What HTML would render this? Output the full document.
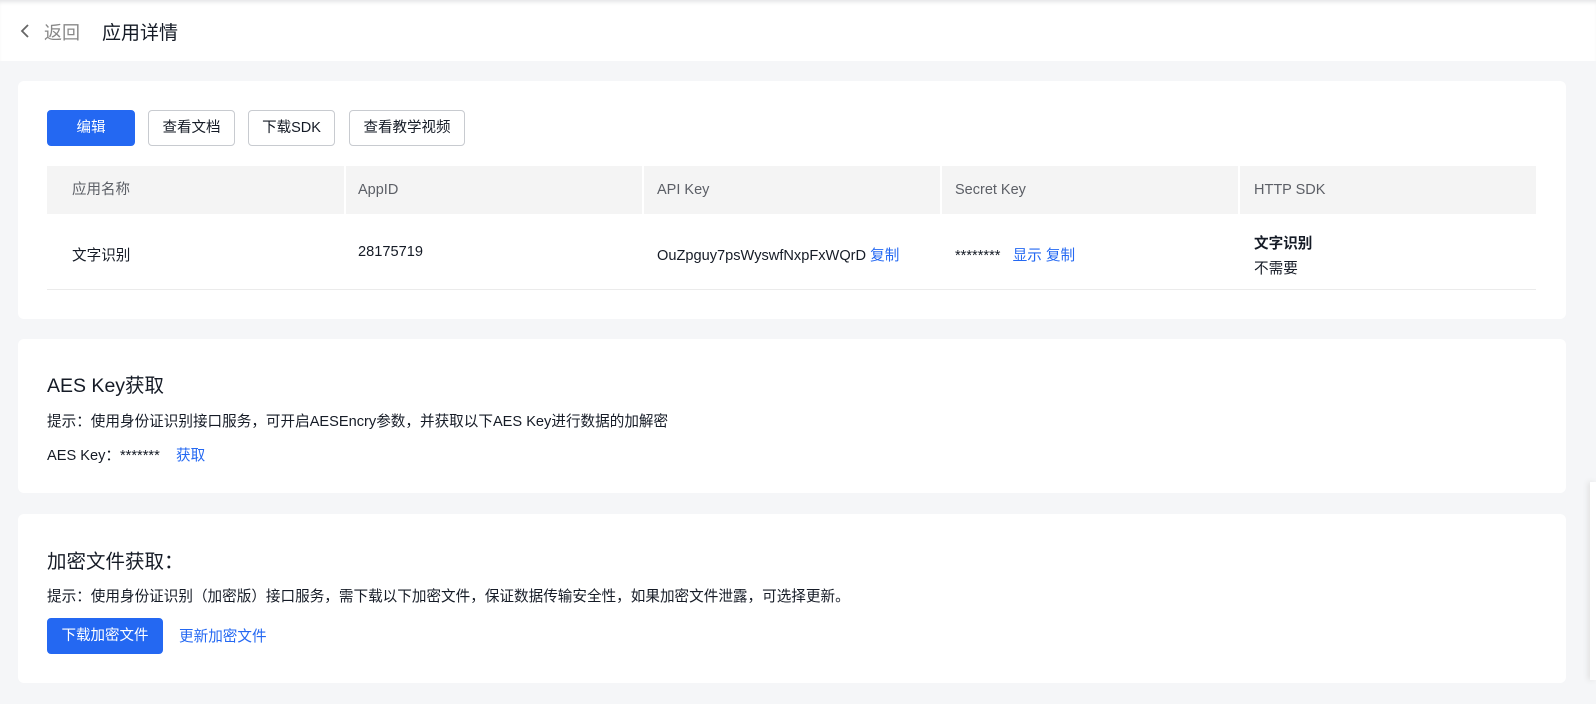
<!DOCTYPE html>
<html><head><meta charset="utf-8"><style>
*{margin:0;padding:0;box-sizing:border-box}
body{width:1596px;height:704px;background:#f5f6f8;font-family:"Liberation Sans","Noto Sans CJK SC",sans-serif;color:#151b26;position:relative;overflow:hidden}
.a{position:absolute;white-space:nowrap}
.hdr{position:absolute;left:0;top:0;width:1596px;height:61px;background:#fff;box-shadow:inset 0 4px 4px -2px #e3e4e6}
.card{position:absolute;left:18px;width:1548px;background:#fff;border-radius:6px}
.btn{position:absolute;height:36px;top:110px;border:1px solid #c8cbd0;border-radius:4px;font-size:14.5px;line-height:34px;text-align:center;background:#fff;color:#151b26}
.pri{background:#2468f2;border-color:#2468f2;color:#fff}
.th{position:absolute;top:166px;height:48px;background:#f4f4f4;font-size:14.5px;color:#5c5f66;line-height:48px;padding-left:25px}
.td{font-size:14.6px;color:#151b26}
.lk{color:#2468f2}
</style></head><body>
<div class="hdr"></div>
<svg class="a" style="left:19px;top:23px" width="12" height="16" viewBox="0 0 12 16"><path d="M9 2 L3 8 L9 14" fill="none" stroke="#666" stroke-width="1.8"/></svg>
<div class="a" style="left:44px;top:19px;font-size:18px;color:#888">返回</div>
<div class="a" style="left:102px;top:18px;font-size:19px;color:#151b26">应用详情</div>

<div class="card" style="top:81px;height:238px"></div>
<div class="btn pri" style="left:47px;width:88px">编辑</div>
<div class="btn" style="left:148px;width:87px">查看文档</div>
<div class="btn" style="left:248px;width:87px">下载SDK</div>
<div class="btn" style="left:349px;width:116px">查看教学视频</div>

<div class="th" style="left:47px;width:297px">应用名称</div>
<div class="th" style="left:346px;width:296px;padding-left:12px">AppID</div>
<div class="th" style="left:644px;width:296px;padding-left:13px">API Key</div>
<div class="th" style="left:942px;width:296px;padding-left:13px">Secret Key</div>
<div class="th" style="left:1240px;width:296px;padding-left:14px">HTTP SDK</div>
<div class="a" style="left:47px;top:289px;width:1489px;height:1px;background:#ebebeb"></div>
<div class="a td" style="left:72px;top:244px">文字识别</div>
<div class="a td" style="left:358px;top:244px">28175719</div>
<div class="a td" style="left:657px;top:244px">OuZpguy7psWyswfNxpFxWQrD <span class="lk">复制</span></div>
<div class="a td" style="left:955px;top:244px">********&nbsp;&nbsp; <span class="lk">显示 复制</span></div>
<div class="a td" style="left:1254px;top:232px;font-weight:bold">文字识别</div>
<div class="a td" style="left:1254px;top:257px">不需要</div>

<div class="card" style="top:339px;height:154px"></div>
<div class="a" style="left:47px;top:369px;font-size:19.5px">AES Key获取</div>
<div class="a td" style="left:47px;top:410px">提示：使用身份证识别接口服务，可开启AESEncry参数，并获取以下AES Key进行数据的加解密</div>
<div class="a td" style="left:47px;top:444px">AES Key：*******&nbsp;&nbsp;&nbsp; <span class="lk">获取</span></div>

<div class="card" style="top:514px;height:169px"></div>
<div class="a" style="left:47px;top:545px;font-size:19.5px">加密文件获取：</div>
<div class="a td" style="left:47px;top:585px">提示：使用身份证识别（加密版）接口服务，需下载以下加密文件，保证数据传输安全性，如果加密文件泄露，可选择更新。</div>
<div class="btn pri" style="left:47px;top:618px;width:116px">下载加密文件</div>
<div class="a td lk" style="left:179px;top:625px">更新加密文件</div>
<div class="a" style="left:1590px;top:482px;width:6px;height:198px;background:#fff;box-shadow:-2px 0 6px #e0e0e0"></div>
</body></html>
